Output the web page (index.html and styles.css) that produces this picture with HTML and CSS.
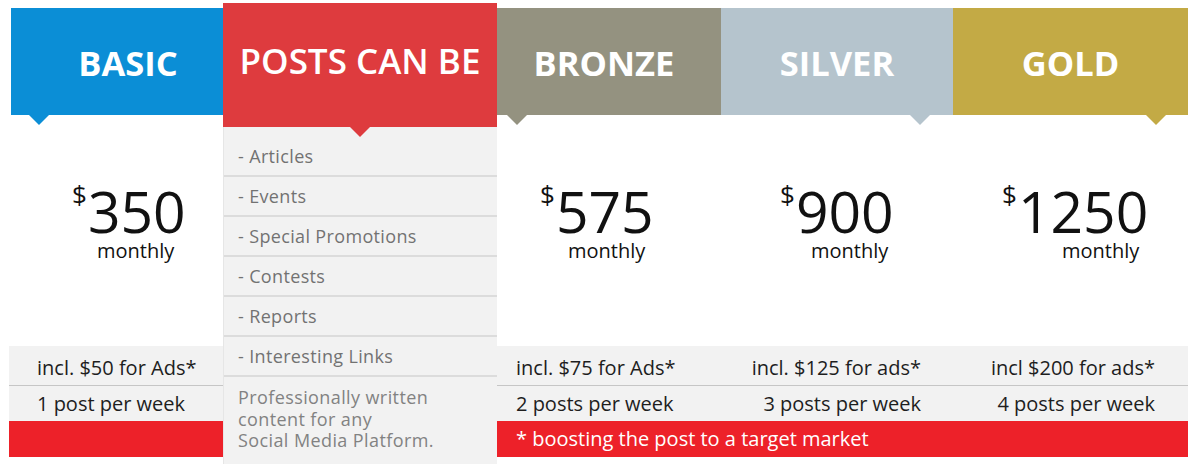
FILE: index.html
```html
<!DOCTYPE html>
<html lang="en">
<head>
<meta charset="utf-8">
<title>Pricing</title>
<link rel="stylesheet" href="styles.css">
</head>
<body>
<div class="pricing">
  <div class="head head--basic"><span class="head__title">BASIC</span></div>

  <div class="posts">
    <div class="posts__head"><span class="posts__title">POSTS CAN BE</span></div>
    <ul class="posts__list">
      <li>- Articles</li>
      <li>- Events</li>
      <li>- Special Promotions</li>
      <li>- Contests</li>
      <li>- Reports</li>
      <li>- Interesting Links</li>
    </ul>
    <p class="posts__note">Professionally written<br>content for any<br>Social Media Platform.</p>
  </div>

  <div class="head head--bronze"><span class="head__title">BRONZE</span></div>
  <div class="head head--silver"><span class="head__title">SILVER</span></div>
  <div class="head head--gold"><span class="head__title">GOLD</span></div>

  <div class="price price--basic">
    <div class="price__amount"><span class="price__cur">$</span><span class="price__num">350</span></div>
    <div class="price__per">monthly</div>
  </div>
  <div class="price price--bronze">
    <div class="price__amount"><span class="price__cur">$</span><span class="price__num">575</span></div>
    <div class="price__per">monthly</div>
  </div>
  <div class="price price--silver">
    <div class="price__amount"><span class="price__cur">$</span><span class="price__num">900</span></div>
    <div class="price__per">monthly</div>
  </div>
  <div class="price price--gold">
    <div class="price__amount"><span class="price__cur">$</span><span class="price__num">1250</span></div>
    <div class="price__per">monthly</div>
  </div>

  <div class="band band--top band--basic">incl. $50 for Ads*</div>
  <div class="band band--top band--bronze">incl. $75 for Ads*</div>
  <div class="band band--top band--right band--silver">incl. $125 for ads*</div>
  <div class="band band--top band--right band--gold">incl $200 for ads*</div>

  <div class="band band--basic">1 post per week</div>
  <div class="band band--bronze">2 posts per week</div>
  <div class="band band--right band--silver">3 posts per week</div>
  <div class="band band--right band--gold">4 posts per week</div>

  <div class="note note--basic"></div>
  <div class="note note--wide">* boosting the post to a target market</div>
</div>
</body>
</html>
```
FILE: styles.css
```css
* { box-sizing: border-box; }

html, body {
  margin: 0;
  padding: 0;
  background: #ffffff;
}

body {
  font-family: "Open Sans", "DejaVu Sans", sans-serif;
  color: #1a1a1a;
  overflow: hidden;
}

.pricing {
  display: grid;
  grid-template-columns: 212px 274px 224px 232px 235px;
  grid-template-rows: 112px 231px 40px 35px 36px 7px;
  margin: 3px 0 0 11px;
}

/* ---------- headers ---------- */
.head {
  position: relative;
  margin-top: 5px;
  height: 107px;
  display: flex;
  align-items: center;
  justify-content: center;
  padding-top: 3px;
}

.head__title {
  color: #ffffff;
  font-weight: 700;
  font-size: 34.5px;
  line-height: 1.36;
}

.head::after {
  content: "";
  position: absolute;
  top: 100%;
  border-left: 10px solid transparent;
  border-right: 10px solid transparent;
  border-top: 10px solid transparent;
}

.head--basic { background: #0b8ed6; padding-left: 22px; }
.head--basic::after { left: 18px; border-top-color: #0b8ed6; }

.head--bronze { background: #949280; padding-right: 10px; }
.head--bronze::after { left: 10px; border-top-color: #949280; }

.head--silver { background: #b5c4cd; }
.head--silver::after { right: 23px; border-top-color: #b5c4cd; }

.head--gold { background: #c3aa45; }
.head--gold::after { right: 22px; border-top-color: #c3aa45; }

/* ---------- posts column ---------- */
.posts {
  grid-column: 2;
  grid-row: 1 / 7;
  display: flex;
  flex-direction: column;
  background: #f2f2f2;
  border-left: 1px solid #e6e6e6;
}

.posts__head {
  position: relative;
  height: 124px;
  background: #de3b3e;
  display: flex;
  align-items: center;
  justify-content: center;
  padding-bottom: 8px;
  margin-left: -1px;
}

.posts__head::after {
  content: "";
  position: absolute;
  top: 100%;
  left: 50%;
  margin-left: -10px;
  border-left: 10px solid transparent;
  border-right: 10px solid transparent;
  border-top: 10px solid #de3b3e;
}

.posts__title {
  color: #ffffff;
  font-size: 35px;
  font-weight: 600;
  line-height: 1.36;
}

.posts__list {
  list-style: none;
  margin: 0;
  padding: 10px 0 0;
}

.posts__list li {
  height: 40px;
  border-bottom: 2px solid #dcdcdc;
  display: flex;
  align-items: center;
  padding-left: 14px;
  font-size: 18px;
  letter-spacing: 0.35px;
  color: #727272;
}

.posts__note {
  margin: 0;
  padding: 10px 0 0 14px;
  font-size: 18px;
  line-height: 21.5px;
  letter-spacing: 0.4px;
  color: #828282;
}

/* ---------- prices ---------- */
.price {
  display: flex;
  flex-direction: column;
  align-items: flex-start;
  padding-top: 68px;
}

.price__amount {
  display: flex;
  align-items: flex-start;
  line-height: 1;
  color: #111111;
}

.price__cur {
  font-size: 26px;
  margin-top: -2px;
  margin-right: 1px;
}

.price__num {
  font-size: 57px;
}

.price__per {
  font-size: 20px;
  line-height: 1;
  margin-top: 1px;
  color: #111111;
}

.price--basic  { padding-left: 61px; }
.price--basic .price__per  { margin-left: 25px; }
.price--bronze { padding-left: 43px; }
.price--bronze .price__per { margin-left: 28px; }
.price--silver { padding-left: 59px; }
.price--silver .price__per { margin-left: 31px; }
.price--gold   { padding-left: 49px; }
.price--gold .price__per   { margin-left: 60px; }

/* ---------- bands ---------- */
.band {
  background: #f2f2f2;
  display: flex;
  align-items: center;
  font-size: 20px;
  color: #1e1e1e;
  white-space: nowrap;
}

.band--top {
  border-bottom: 1px solid #c6c6c6;
  padding-top: 4px;
}

.band--basic  { padding-left: 28px; margin-left: -2px; }
.band--bronze { padding-left: 19px; }
.band--right  { justify-content: flex-end; }
.band--silver { padding-right: 32px; }
.band--gold   { padding-right: 33px; }

.note {
  background: #ed2129;
  color: #ffffff;
  font-size: 20px;
  display: flex;
  align-items: center;
}

.note--basic { margin-left: -2px; }

.note--wide {
  grid-column: 3 / 6;
  padding-left: 19px;
  padding-bottom: 2px;
}
```
